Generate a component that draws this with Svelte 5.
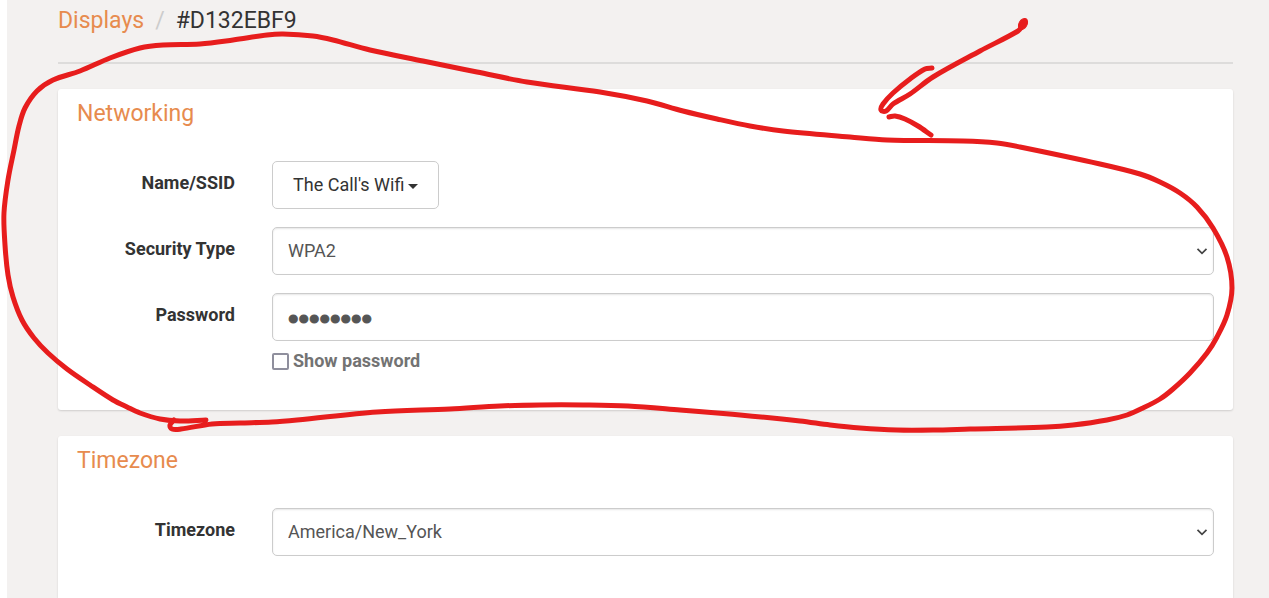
<script>
  let security = $state('WPA2');
  let timezone = $state('America/New_York');
  let password = $state('password');
  let showPassword = $state(false);

  const loop = [
    [174, 420], [170, 425], [172, 429], [181, 429], [212, 424], [240, 423], [272, 422], [297, 420], [377, 412],
    [450, 409], [500, 406], [540, 405], [583, 405], [628, 406], [680, 410], [740, 415], [800, 421],
    [830, 425], [860, 428], [897, 430], [933, 430], [970, 429], [1047, 427], [1073, 425], [1107, 420],
    [1127, 415], [1143, 408], [1160, 399], [1173, 389], [1190, 373], [1207, 353], [1217, 337],
    [1227, 315], [1232, 288], [1227, 257], [1213, 228], [1197, 207], [1180, 193], [1160, 182],
    [1140, 174], [1100, 164], [1020, 147], [997, 143], [963, 141], [887, 140], [850, 137],
    [783, 131], [750, 126], [717, 119], [683, 111], [647, 101], [600, 92], [527, 82], [477, 72],
    [423, 61], [370, 50], [333, 40], [313, 36], [283, 34], [267, 35], [233, 40], [200, 44], [163, 45],
    [140, 48], [110, 58], [80, 71], [53, 80], [37, 91], [25, 108], [19, 126], [14, 150], [8, 180],
    [4, 213], [5, 245], [8, 275], [13, 297], [22, 320], [34, 338], [48, 353], [67, 369], [90, 385],
    [113, 400], [127, 407], [140, 413], [160, 419], [180, 421], [206, 420]
  ];
  const arrow = [
    [1023, 25], [1018, 31], [980, 51], [933, 77], [910, 94], [893, 104], [886, 111],
    [881, 110], [883, 104], [893, 93], [910, 79], [925, 69], [932, 68]
  ];
  const barb = [[889, 117], [895, 116], [905, 119], [918, 126], [931, 135]];

  // Smooth curve through every point of a stroke.
  function curve(points) {
    let d = `M${points[0]}`;
    for (let i = 0; i < points.length - 1; i++) {
      const a = points[i - 1] ?? points[i];
      const b = points[i];
      const c = points[i + 1];
      const e = points[i + 2] ?? c;
      const k = Math.hypot(c[0] - b[0], c[1] - b[1]) / 3;
      const m = Math.hypot(c[0] - a[0], c[1] - a[1]) || 1;
      const n = Math.hypot(e[0] - b[0], e[1] - b[1]) || 1;
      d += `C${b[0] + ((c[0] - a[0]) * k) / m},${b[1] + ((c[1] - a[1]) * k) / m} `;
      d += `${c[0] - ((e[0] - b[0]) * k) / n},${c[1] - ((e[1] - b[1]) * k) / n} ${c}`;
    }
    return d;
  }
</script>

{#snippet chevron()}
  <svg class="chevron" viewBox="0 0 12 12" aria-hidden="true">
    <path d="M1.5 3.8l4.5 4.5 4.5-4.5" />
  </svg>
{/snippet}

<main class="page">
  <nav class="breadcrumb">
    <a href="#displays">Displays</a>
    <span class="slash">/</span>
    <span>#D132EBF9</span>
  </nav>

  <section class="card">
    <h2>Networking</h2>
    <div class="row">
      <label for="ssid">Name/SSID</label>
      <div class="field">
        <button id="ssid" type="button">The Call's Wifi<span class="caret"></span></button>
      </div>
    </div>
    <div class="row">
      <label for="security">Security Type</label>
      <div class="field">
        <select id="security" class="control" bind:value={security}>
          <option>WPA2</option>
        </select>
        {@render chevron()}
      </div>
    </div>
    <div class="row">
      <label for="password">Password</label>
      <div class="field">
        <input
          id="password"
          class="control"
          class:masked={!showPassword}
          type={showPassword ? 'text' : 'password'}
          bind:value={password}
        />
        <label class="check"><input type="checkbox" bind:checked={showPassword} />Show password</label>
      </div>
    </div>
  </section>

  <section class="card last">
    <h2>Timezone</h2>
    <div class="row">
      <label for="timezone">Timezone</label>
      <div class="field">
        <select id="timezone" class="control" bind:value={timezone}>
          <option>America/New_York</option>
        </select>
        {@render chevron()}
      </div>
    </div>
  </section>

  <svg class="ink" viewBox="0 0 1269 598" aria-hidden="true">
    <path d={curve(loop)} />
    <path d={curve(arrow)} />
    <path d={curve(barb)} />
    <ellipse cx="1023" cy="24" rx="4" ry="6" transform="rotate(30 1023 24)" />
  </svg>
</main>

<style>
  :global(body) {
    margin: 0;
    background: #fff;
  }
  .page {
    position: relative;
    display: flex;
    flex-direction: column;
    box-sizing: border-box;
    min-height: 100vh;
    margin-left: 7px;
    padding: 0 36px 0 51px;
    background: #f3f1f0;
    color: #333;
    font: 18px/26px Roboto, sans-serif;
  }
  .breadcrumb {
    display: flex;
    gap: 11px;
    padding: 5px 0 25px;
    margin-bottom: 25px;
    border-bottom: 2px solid #dddcdb;
    font-size: 23px;
    line-height: 32px;
  }
  .breadcrumb a {
    color: #e78b4e;
    text-decoration: none;
  }
  .slash {
    color: #ccc;
  }
  .card {
    display: flex;
    flex-direction: column;
    gap: 18px;
    padding: 9px 19px 36px;
    border-radius: 3px;
    background: #fff;
    box-shadow: 0 1px 2px rgba(0, 0, 0, 0.15);
  }
  .last {
    flex: 1;
    margin-top: 26px;
    border-radius: 3px 3px 0 0;
  }
  h2 {
    margin: 0 0 13px;
    color: #e78b4e;
    font-size: 23px;
    font-weight: 400;
    line-height: 32px;
  }
  .row {
    display: grid;
    grid-template-columns: 158px minmax(0, 1fr);
    gap: 37px;
  }
  .row > label {
    padding-top: 9px;
    font-weight: 700;
    text-align: right;
  }
  .field {
    position: relative;
  }
  button,
  .control {
    display: block;
    box-sizing: border-box;
    height: 48px;
    border: 1px solid #ccc;
    border-radius: 5px;
    background: #fff;
    font: inherit;
  }
  button {
    display: flex;
    align-items: center;
    gap: 4px;
    padding: 0 20px;
    color: #333;
  }
  .caret {
    border: 5px solid transparent;
    border-top-color: #333;
    border-bottom: 0;
    margin-top: 3px;
  }
  .control {
    width: 100%;
    padding: 0 15px;
    appearance: none;
    color: #555;
    box-shadow: inset 0 1px 2px rgba(0, 0, 0, 0.1);
  }
  .masked {
    padding-top: 4px;
    font-family: "Liberation Sans", Arial, sans-serif;
    font-size: 30px;
    -webkit-text-stroke: 1px #555;
  }
  .chevron {
    position: absolute;
    top: 18px;
    right: 6px;
    width: 12px;
    height: 12px;
    fill: none;
    stroke: #444;
    stroke-width: 1.7;
    pointer-events: none;
  }
  .check {
    display: flex;
    align-items: center;
    gap: 4px;
    width: fit-content;
    margin-top: 7px;
    color: #737373;
    font-weight: 700;
  }
  .check input {
    appearance: none;
    box-sizing: border-box;
    width: 17px;
    height: 17px;
    margin: 0;
    border: 2px solid #8f8f9d;
    border-radius: 2px;
    background: #fff;
  }
  .check input:checked {
    background: #8f8f9d;
  }
  .ink {
    position: absolute;
    top: 0;
    left: -7px;
    width: calc(100% + 7px);
    fill: none;
    stroke: #e71d1d;
    stroke-width: 5;
    stroke-linecap: round;
    stroke-linejoin: round;
    pointer-events: none;
  }
  .ink ellipse {
    fill: #e71d1d;
    stroke-width: 1;
  }
</style>
